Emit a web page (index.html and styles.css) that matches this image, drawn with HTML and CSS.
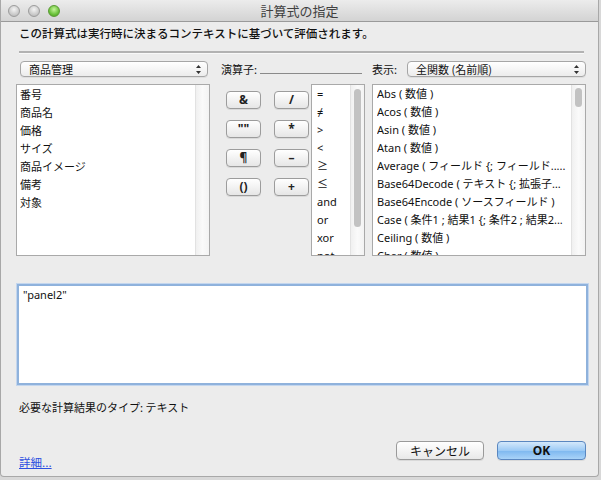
FILE: index.html
```html
<!DOCTYPE html>
<html lang="ja">
<head>
<meta charset="utf-8">
<title>計算式の指定</title>
<link rel="stylesheet" href="styles.css">
</head>
<body>
<div class="window">
  <div class="titlebar">
    <div class="lights">
      <span class="light gray"></span>
      <span class="light gray"></span>
      <span class="light green"></span>
    </div>
    <div class="title">計算式の指定</div>
  </div>
  <div class="content">
    <div class="desc">この計算式は実行時に決まるコンテキストに基づいて評価されます。</div>
    <div class="sep"></div>
    <div class="top">
      <div class="popup popup-left"><span>商品管理</span><svg class="arrows" width="5" height="9" viewBox="0 0 5 9"><path d="M2.5 0 L5 3 L0 3 Z M2.5 9 L5 6 L0 6 Z" fill="#333"/></svg></div>
      <div class="oplabel"><span>演算子:</span><span class="opline"></span></div>
      <div class="showrow"><span class="showlabel">表示:</span><div class="popup popup-right"><span>全関数 (名前順)</span><svg class="arrows" width="5" height="9" viewBox="0 0 5 9"><path d="M2.5 0 L5 3 L0 3 Z M2.5 9 L5 6 L0 6 Z" fill="#333"/></svg></div></div>

      <div class="list fields">
        <ul class="items">
          <li>番号</li><li>商品名</li><li>価格</li><li>サイズ</li><li>商品イメージ</li><li>備考</li><li>対象</li>
        </ul>
        <div class="track"></div>
      </div>
      <div class="middle">
        <div class="btns">
          <button class="opbtn">&amp;</button><button class="opbtn">/</button>
          <button class="opbtn">""</button><button class="opbtn">*</button>
          <button class="opbtn">¶</button><button class="opbtn">–</button>
          <button class="opbtn">()</button><button class="opbtn">+</button>
        </div>
        <div class="list ops">
          <ul class="items">
            <li>=</li><li>≠</li><li>&gt;</li><li>&lt;</li><li>≥</li><li>≤</li><li>and</li><li>or</li><li>xor</li><li>not</li>
          </ul>
          <div class="track"><div class="thumb thumb-ops"></div></div>
        </div>
      </div>
      <div class="list funcs">
        <ul class="items">
          <li>Abs ( 数値 )</li>
          <li>Acos ( 数値 )</li>
          <li>Asin ( 数値 )</li>
          <li>Atan ( 数値 )</li>
          <li>Average ( フィールド {; フィールド.....</li>
          <li>Base64Decode ( テキスト {; 拡張子…</li>
          <li>Base64Encode ( ソースフィールド )</li>
          <li>Case ( 条件1 ; 結果1 {; 条件2 ; 結果2...</li>
          <li>Ceiling ( 数値 )</li>
          <li>Char ( 数値 )</li>
        </ul>
        <div class="track"><div class="thumb thumb-funcs"></div></div>
      </div>
    </div>
    <div class="editor">"panel2"</div>
    <div class="result">必要な計算結果のタイプ: テキスト</div>
    <div class="bottom">
      <a class="more" href="#">詳細...</a>
      <div class="actions">
        <button class="btn">キャンセル</button>
        <button class="btn ok">OK</button>
      </div>
    </div>
  </div>
</div>
</body>
</html>
```

FILE: styles.css
```css
* { box-sizing: border-box; }
html, body { margin: 0; padding: 0; background: #d8d8d8; }
body {
  width: 601px; height: 480px; overflow: hidden;
  font-family: "Noto Sans", "Noto Sans CJK JP", sans-serif;
  font-size: 11px; color: #111;
}
.window {
  width: 599px; height: 477px;
  background: #ececec;
  border: 1px solid #a8a8a8; border-top: none;
  border-radius: 0 0 4px 4px;
  display: flex; flex-direction: column;
}
.titlebar {
  height: 22px; flex: none;
  background: linear-gradient(#ececec, #d3d3d3);
  border-bottom: 1px solid #9a9a9a;
  position: relative;
  display: flex; align-items: center; justify-content: center;
}
.lights { position: absolute; left: 7px; top: 5px; display: flex; gap: 8px; }
.light { width: 12px; height: 12px; border-radius: 50%; border: 1px solid #9c9c9c; }
.light.gray { background: radial-gradient(circle at 50% 35%, #f4f4f4, #c4c4c4 70%, #b0b0b0); }
.light.green { background: radial-gradient(circle at 50% 35%, #c6f59c, #6ac23a 60%, #4a9a20); border-color: #5a9a34; }
.title { font-family: "Noto Sans CJK JP", sans-serif; font-size: 13px; color: #404040; line-height: 1; }
.content { flex: 1; padding: 0 12px 0 15px; display: flex; flex-direction: column; }
.content > * { flex: none; }
.desc { font-family: "Noto Sans CJK JP", sans-serif; font-size: 11.5px; font-weight: 500; margin: 3px 0 0 3px; line-height: 16px; }
.sep { margin: 10px 2px 0 3px; background: #b2b2b2; border-bottom: 1px solid #f8f8f8; height: 3px; }
.top {
  display: grid;
  grid-template-columns: 194px 148px 214px;
  column-gap: 0;
  grid-template-rows: 16px 172px;
  row-gap: 7px;
  margin-top: 7px;
  justify-content: space-between;
}
.popup {
  height: 16px;
  background: linear-gradient(#ffffff, #ececec);
  border: 1px solid #a6a6a6;
  border-radius: 4px;
  display: flex; align-items: center; justify-content: space-between;
  padding: 0 6px 0 8px;
  font-family: "Noto Sans CJK JP", sans-serif; font-size: 11px;
  box-shadow: 0 1px 0 rgba(0,0,0,0.06);
}
.popup-left { margin: 0 2px 0 4px; }
.arrows { flex: none; }
.oplabel { display: flex; align-items: center; padding-left: 4px; font-family: "Noto Sans CJK JP", sans-serif; }
.opline { flex: 1; height: 1px; background: #8a8a8a; margin: 8px 3px 0 3px; }
.showrow { display: flex; align-items: center; }
.showlabel { width: 35px; font-family: "Noto Sans CJK JP", sans-serif; }
.showrow .popup { flex: 1; }
.list {
  background: #fff;
  border: 1px solid #a9a9a9;
  display: flex; overflow: hidden;
  position: relative;
}
.items { list-style: none; margin: 0; padding: 0 0 0 3px; flex: 1; overflow: hidden; min-width: 0; }
.items li { height: 18px; line-height: 18px; white-space: nowrap; overflow: hidden; font-size: 11px; }
.fields .items li { font-family: "Noto Sans CJK JP", sans-serif; }
.track {
  width: 14px; flex: none;
  background: linear-gradient(90deg, #f0f0f0, #fafafa 50%, #f3f3f3);
  border-left: 1px solid #e2e2e2;
  padding: 3px 3px;
}
.thumb { width: 7px; border-radius: 4px; background: #c2c2c2; margin: 0 auto; }
.thumb-ops { height: 138px; margin-top: 1px; }
.thumb-funcs { height: 19px; margin-top: 0; }
.middle { display: flex; justify-content: space-between; padding-left: 9px; }
.btns {
  display: grid; grid-template-columns: 35px 35px; column-gap: 13px;
  grid-auto-rows: 18px; row-gap: 11px; align-content: start;
  padding-top: 7px;
}
.opbtn {
  margin: 0; padding: 0;
  border: 1px solid #9c9c9c; border-radius: 4px;
  background: linear-gradient(#ffffff, #e6e6e6);
  font-family: "Noto Sans", sans-serif; font-size: 12px; font-weight: 700; color: #222;
  line-height: 16px;
  box-shadow: 0 1px 0 rgba(0,0,0,0.08);
}
.ops { width: 54px; }
.ops .items { padding-left: 5px; }
.funcs .items { padding-left: 4px; }
.editor {
  margin-top: 28px; height: 101px; margin-left: 1px;
  background: #fff;
  border: 2px solid #8fb2dc;
  box-shadow: 0 0 0 1px #c3d6ee;
  padding: 1px 4px;
  font-size: 11px; line-height: 16px;
  width: 571px;
}
.result { margin: 14px 0 0 3px; font-family: "Noto Sans CJK JP", sans-serif; line-height: 16px; }
.bottom { display: flex; justify-content: space-between; align-items: flex-start; margin-top: 26px; }
.more { color: #2d4fe0; font-family: "Noto Sans CJK JP", sans-serif; font-size: 11.5px; margin: 13px 0 0 3px; line-height: 16px; text-decoration: underline; }
.actions { display: flex; gap: 13px; }
.btn {
  width: 88px; height: 19px; margin: 0; padding: 0;
  border: 1px solid #9a9a9a; border-radius: 4px;
  background: linear-gradient(#ffffff, #e8e8e8);
  font-family: "Noto Sans CJK JP", sans-serif; font-size: 12px; color: #111;
  box-shadow: 0 1px 0 rgba(0,0,0,0.08);
  line-height: 17px;
}
.btn.ok {
  width: 89px;
  background: linear-gradient(#d4e8fb, #9ccaf5 50%, #7db7ef 51%, #a9d3f8);
  border-color: #5a87c0;
  font-family: "Noto Sans", sans-serif; font-weight: 700;
}
```
